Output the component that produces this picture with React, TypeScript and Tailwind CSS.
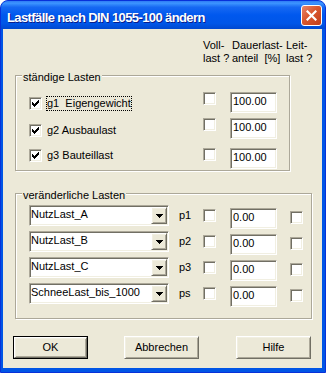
import React from "react";

// classic 3D edges with the Luna colour scheme
const raised =
  "border border-t-white border-l-white border-r-[#716f64] border-b-[#716f64] shadow-[inset_1px_1px_0_#f1efe2,inset_-1px_-1px_0_#aca899]";
const sunken =
  "border border-t-[#aca899] border-l-[#aca899] border-r-white border-b-white shadow-[inset_1px_1px_0_#716f64,inset_-1px_-1px_0_#f1efe2]";
const etched = "relative border border-[#aca899] shadow-[1px_1px_0_#fff,inset_1px_1px_0_#fff]";

const staendig = [
  { label: "g1  Eigengewicht", checked: true, focus: true, value: "100.00", leftMt: "mt-0", rightMt: "mt-0" },
  { label: "g2 Ausbaulast", checked: true, focus: false, value: "100.00", leftMt: "mt-[14px]", rightMt: "mt-[5px]" },
  { label: "g3 Bauteillast", checked: true, focus: false, value: "100.00", leftMt: "mt-[12px]", rightMt: "mt-[9px]" },
];

const veraenderlich = [
  { name: "NutzLast_A", short: "p1", value: "0.00" },
  { name: "NutzLast_B", short: "p2", value: "0.00" },
  { name: "NutzLast_C", short: "p3", value: "0.00" },
  { name: "SchneeLast_bis_1000", short: "ps", value: "0.00" },
];

function CheckBox({ checked = false, className = "" }: { checked?: boolean; className?: string }) {
  return (
    <div className={`relative w-[13px] h-[13px] shrink-0 bg-white ${sunken} ${className}`}>
      {checked && (
        <svg className="absolute left-[2px] top-[2px]" width="7" height="7" viewBox="0 0 7 7" shapeRendering="crispEdges">
          <rect x="0" y="2" width="1" height="3" fill="#000" />
          <rect x="1" y="3" width="1" height="3" fill="#000" />
          <rect x="2" y="4" width="1" height="3" fill="#000" />
          <rect x="3" y="3" width="1" height="3" fill="#000" />
          <rect x="4" y="2" width="1" height="3" fill="#000" />
          <rect x="5" y="1" width="1" height="3" fill="#000" />
          <rect x="6" y="0" width="1" height="3" fill="#000" />
        </svg>
      )}
    </div>
  );
}

function TextField({ value, className = "" }: { value: string; className?: string }) {
  return (
    <div className={`w-[47px] h-[21px] shrink-0 bg-white pl-[2px] pt-[2px] leading-[13px] ${sunken} ${className}`}>
      {value}
    </div>
  );
}

function Combo({ value }: { value: string }) {
  return (
    <div className={`flex w-[140px] h-[21px] shrink-0 bg-white ${sunken}`}>
      <div className="flex-1 pl-[1px] pt-[2px] leading-[13px] whitespace-nowrap overflow-hidden">{value}</div>
      <div className={`w-[16px] h-[17px] m-[1px] flex items-center justify-center bg-[#ece9d8] ${raised}`}>
        <svg width="7" height="4" viewBox="0 0 7 4" shapeRendering="crispEdges">
          <rect x="0" y="0" width="7" height="1" fill="#000" />
          <rect x="1" y="1" width="5" height="1" fill="#000" />
          <rect x="2" y="2" width="3" height="1" fill="#000" />
          <rect x="3" y="3" width="1" height="1" fill="#000" />
        </svg>
      </div>
    </div>
  );
}

function Button({ label, isDefault = false, className = "" }: { label: string; isDefault?: boolean; className?: string }) {
  return (
    <div className={`w-[75px] h-[23px] shrink-0 ${isDefault ? "border border-black" : ""} ${className}`}>
      <div className={`h-full flex items-center justify-center bg-[#ece9d8] ${raised}`}>{label}</div>
    </div>
  );
}

export default function App() {
  return (
    <div className="w-[326px] h-[373px] bg-white font-['Liberation_Sans',Arial,sans-serif] text-[11px] text-black">
      <div className="flex flex-col h-full rounded-t-[8px] overflow-hidden bg-[#0055e5] border border-[#0831d9]">
        {/* title bar */}
        <div className="flex h-[28px] shrink-0 bg-[linear-gradient(to_bottom,#2f7bf5_0%,#3d95ff_8%,#1769f2_22%,#0058ee_50%,#0056e8_80%,#0048cf_100%)]">
          <div className="pl-[6px] pt-[9px] text-[13px] leading-[15px] font-bold tracking-[-0.6px] text-white [text-shadow:1px_1px_0_#0a1e8a] whitespace-nowrap">
            Lastfälle nach DIN 1055-100 ändern
          </div>
          <div className="ml-auto mr-[3px] mt-[4px] w-[21px] h-[21px] rounded-[3px] border border-white bg-[linear-gradient(135deg,#e8866c_0%,#d9572f_45%,#c23d1a_100%)] flex items-center justify-center">
            <svg width="11" height="11" viewBox="0 0 11 11">
              <path d="M1.5 1.5 L9.5 9.5 M9.5 1.5 L1.5 9.5" stroke="#fff" strokeWidth="2.2" strokeLinecap="square" />
            </svg>
          </div>
        </div>

        {/* client area */}
        <div className="flex-1 ml-[2px] mr-[3px] mb-[4px] bg-[#ece9d8] flex flex-col">
          {/* column headers */}
          <div className="flex pt-[10px] pl-[200px] leading-[13px]">
            <div className="w-[29px]">
              <div>Voll-</div>
              <div>last ?</div>
            </div>
            <div className="w-[54px]">
              <div>Dauerlast-</div>
              <div className="whitespace-pre">anteil  [%]</div>
            </div>
            <div>
              <div>Leit-</div>
              <div>last ?</div>
            </div>
          </div>

          {/* ständige Lasten */}
          <div className={`${etched} mt-[10px] ml-[12px] w-[275px] h-[96px] flex`}>
            <span className="absolute left-[6px] -top-[5px] px-[1px] leading-[13px] bg-[#ece9d8]">ständige Lasten</span>
            <div className="w-[187px] pl-[13px] pt-[21px] flex flex-col">
              {staendig.map((r) => (
                <div key={r.label} className={`flex items-center h-[13px] ${r.leftMt}`}>
                  <CheckBox checked={r.checked} />
                  <span
                    className={`ml-[5px] leading-[13px] whitespace-pre ${r.focus ? "outline outline-1 outline-dotted outline-black" : ""}`}
                  >
                    {r.label}
                  </span>
                </div>
              ))}
            </div>
            <div className="pt-[16px] flex flex-col">
              {staendig.map((r) => (
                <div key={r.label} className={`flex ${r.rightMt}`}>
                  <CheckBox />
                  <TextField value={r.value} className="ml-[14px]" />
                </div>
              ))}
            </div>
          </div>

          {/* veränderliche Lasten */}
          <div className={`${etched} mt-[22px] ml-[12px] w-[297px] pt-[11px] pb-[9px]`}>
            <span className="absolute left-[6px] -top-[5px] px-[1px] leading-[13px] bg-[#ece9d8]">veränderliche Lasten</span>
            {veraenderlich.map((r) => (
              <div key={r.short} className="flex items-start h-[26px] pl-[13px]">
                <Combo value={r.name} />
                <div className="ml-[10px] w-[24px] pt-[4px] leading-[13px]">{r.short}</div>
                <CheckBox className="mt-[4px]" />
                <TextField value={r.value} className="ml-[14px] mt-[3px]" />
                <CheckBox className="ml-[13px] mt-[6px]" />
              </div>
            ))}
          </div>

          {/* buttons */}
          <div className="flex mt-[17px] pl-[10px]">
            <Button label="OK" isDefault />
            <Button label="Abbrechen" className="ml-[36px]" />
            <Button label="Hilfe" className="ml-[37px]" />
          </div>
        </div>
      </div>
    </div>
  );
}
